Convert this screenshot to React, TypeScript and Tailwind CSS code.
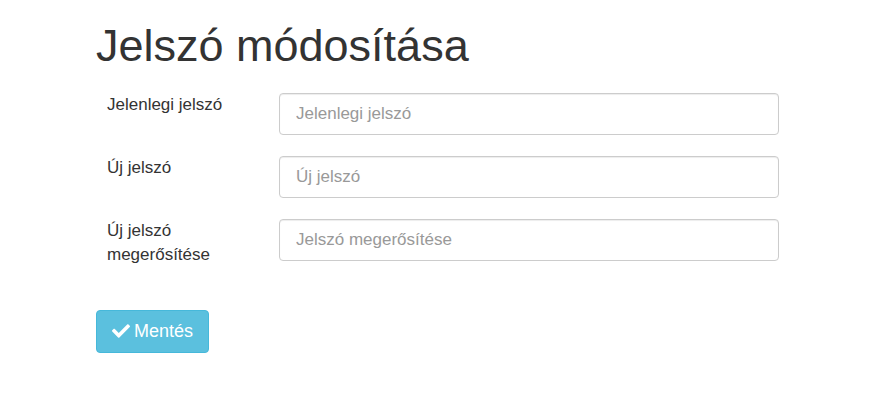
import { FaCheck } from "react-icons/fa";

const fields = [
    { label: "Jelenlegi jelszó", placeholder: "Jelenlegi jelszó" },
    { label: "Új jelszó", placeholder: "Új jelszó" },
    { label: "Új jelszó megerősítése", placeholder: "Jelszó megerősítése" },
];

const App = () => {
    return (
        <div className="min-h-screen bg-white text-[#333] font-['Liberation_Sans',Arial,sans-serif]">
            <div className="pl-[96px] pt-[21px]">
                <h1 className="text-[45px] leading-[1.1] font-normal">Jelszó módosítása</h1>

                <form className="mt-[22px] flex flex-col gap-[21px]">
                    {fields.map((f) => (
                        <div key={f.label} className="flex items-start">
                            <label className="w-[183px] pl-[11px] pr-[30px] text-[17px] leading-[24px]">
                                {f.label}
                            </label>
                            <input
                                type="password"
                                placeholder={f.placeholder}
                                className="w-[500px] h-[42px] px-4 text-[17px] border border-[#ccc] rounded-[4px] shadow-[inset_0_1px_1px_rgba(0,0,0,0.075)] placeholder:text-[#999] outline-none"
                            />
                        </div>
                    ))}
                </form>

                <button
                    type="button"
                    className="mt-[43px] w-[113px] h-[43px] flex items-center justify-center gap-[4px] rounded-[4px] bg-[#5bc0de] border border-[#46b8da] text-white text-[18px]"
                >
                    <FaCheck className="text-[18px]" />
                    Mentés
                </button>
            </div>
        </div>
    );
};

export default App;
